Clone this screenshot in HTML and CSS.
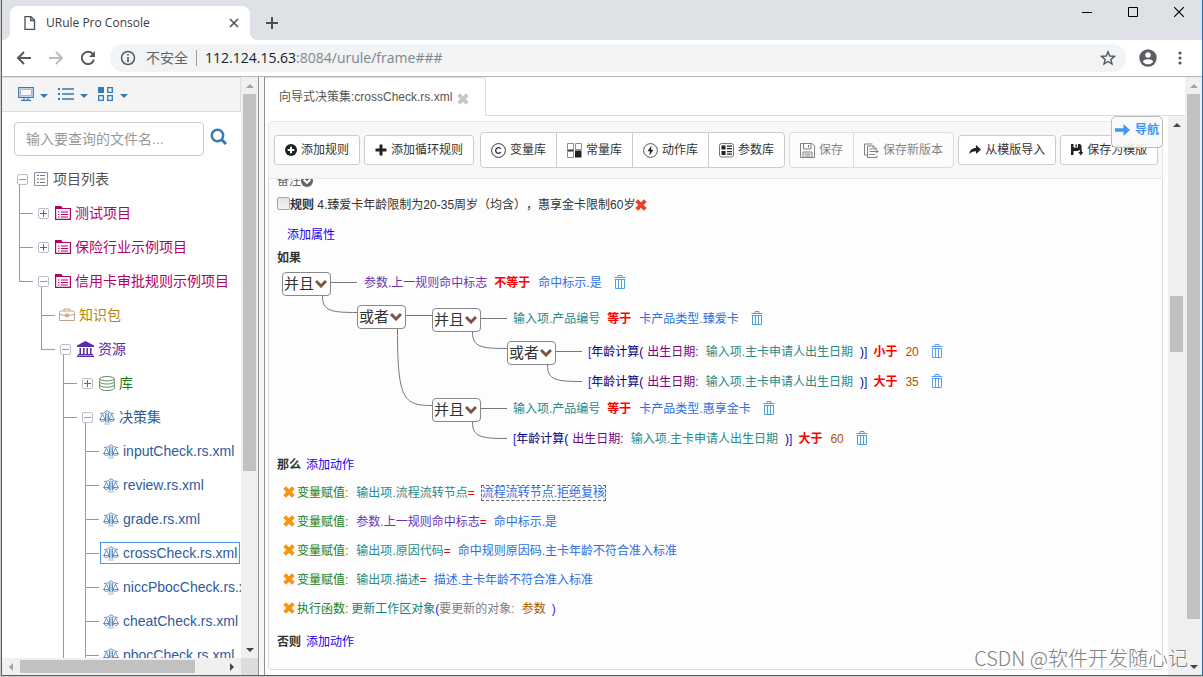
FILE: index.html
```html
<!DOCTYPE html>
<html lang="zh-CN">
<head>
<meta charset="utf-8">
<title>URule Pro Console</title>
<link rel="stylesheet" href="styles.css">
</head>
<body>
<svg class="sprite" aria-hidden="true">
  <symbol id="i-scale" viewBox="0 0 16 16"><path d="M6.500 3.500h3v10h-3z" fill="#a6d0f0"/><g fill="none" stroke="#5f82b4" stroke-width=".9"><path d="M1 4.500Q5 4.500 6 3Q8 .5 10 3Q11 4.500 15 4.500M6.500 4V13.500M9.500 4V13.500M3.500 5L1 10.500M3.500 5L6 10.500M12.500 5L10 10.500M12.500 5L15 10.500"/><path d="M.5 10.500H6Q5.500 12.500 3.500 12.500T.5 10.500ZM10 10.500H15.500Q14.500 12.500 12.500 12.500T10 10.500Z"/><path d="M5 15H11" stroke="#aab"/></g></symbol>
  <symbol id="i-project" viewBox="0 0 16 16"><path d="M.6 14.400V3.500H15.400V14.400Z" fill="none" stroke="currentColor" stroke-width="1.200"/><path d="M0 4V1h6.500l1 2H16v1zM3 6.500h1.500v1H3zM3 9h1.500v1H3zM3 11.500h1.500v1H3zM6 6.500h7v1H6zM6 9h7v1H6zM6 11.500h7v1H6z" fill="currentColor"/></symbol>
  <symbol id="i-trash" viewBox="0 0 12 14"><path d="M.5 2.500H11.500M4 2V.5H8V2M1.500 4V13.500H10.500V4M4.500 4V13M7.500 4V13M1.500 4.500H10.500" fill="none" stroke="currentColor" stroke-width="1"/></symbol>
  <symbol id="i-x" viewBox="0 0 12 12"><path d="M.3 3L3 .3L6 3.300L9 .3L11.700 3L8.700 6L11.700 9L9 11.700L6 8.700L3 11.700L.3 9L3.300 6Z" fill="currentColor"/></symbol>
  <symbol id="i-chev" viewBox="0 0 12 9"><path d="M1 2L6 7L11 2" fill="none" stroke="currentColor" stroke-width="3"/></symbol>
  <symbol id="i-up" viewBox="0 0 8 4"><path d="M0 4L4 0L8 4Z" fill="currentColor"/></symbol>
  <symbol id="i-down" viewBox="0 0 8 4"><path d="M0 0L4 4L8 0Z" fill="currentColor"/></symbol>
</svg>

<div class="window">
  <header class="tabstrip">
    <div class="browser-tab">
      <svg width="12" height="14" viewBox="0 0 12 14" fill="none" stroke="#4a4d51" stroke-width="1.300"><path d="M1 .7H7L10.500 4.200V13.300H1Z"/><path d="M6.700 1V4.500H10.500"/></svg>
      <span>URule Pro Console</span>
      <button class="bare" aria-label="关闭标签页"><svg width="10" height="10" viewBox="0 0 10 10" stroke="#4a4d51" stroke-width="1.500"><path d="M1 1L9 9M9 1L1 9"/></svg></button>
    </div>
    <button class="bare newtab" aria-label="新标签页"><svg width="12" height="12" viewBox="0 0 12 12" stroke="#4a4d51" stroke-width="2"><path d="M0 6H12M6 0V12"/></svg></button>
    <div class="winbtns">
      <button class="bare" aria-label="最小化"><svg width="10" height="10" viewBox="0 0 10 10" stroke="#000"><path d="M0 5.500H10"/></svg></button>
      <button class="bare" aria-label="最大化"><svg width="10" height="10" viewBox="0 0 10 10" stroke="#000" fill="none"><path d="M.5.5H9.500V9.500H.5Z"/></svg></button>
      <button class="bare" aria-label="关闭"><svg width="10" height="10" viewBox="0 0 10 10" stroke="#000" stroke-width="1.200"><path d="M0 0L10 10M10 0L0 10"/></svg></button>
    </div>
  </header>

  <nav class="navbar">
    <button class="bare nb" aria-label="后退"><svg width="16" height="16" viewBox="0 0 16 16" fill="none" stroke="#55585c" stroke-width="2"><path d="M15 8H2M8 2L2 8L8 14"/></svg></button>
    <button class="bare nb" aria-label="前进"><svg width="16" height="16" viewBox="0 0 16 16" fill="none" stroke="#bbb" stroke-width="2"><path d="M1 8H14M8 2L14 8L8 14"/></svg></button>
    <button class="bare nb" aria-label="刷新"><svg width="16" height="16" viewBox="0 0 16 16"><path d="M13 4.200A6.200 6.200 0 1 0 14 9.500" fill="none" stroke="#55585c" stroke-width="2"/><path d="M15 1V7H9Z" fill="#55585c"/></svg></button>
    <div class="omnibox">
      <svg width="16" height="16" viewBox="0 0 16 16"><circle cx="8" cy="8" r="6.500" fill="none" stroke="#55585c" stroke-width="1.500"/><path d="M7.200 4h1.600v1.600H7.200zM7.200 7h1.600v5H7.200z" fill="#55585c"/></svg>
      <span class="insecure">不安全</span>
      <span class="url"><b>112.124.15.63</b>:8084/urule/frame###</span>
      <button class="bare star" aria-label="收藏"><svg width="16" height="16" viewBox="0 0 16 16" fill="none" stroke="#55585c" stroke-width="1.400"><path d="M8 1.700L9.800 6L14.400 6.400L10.900 9.400L12 14L8 11.500L4 14L5.100 9.400L1.600 6.400L6.200 6Z"/></svg></button>
    </div>
    <button class="bare" aria-label="用户"><svg width="18" height="18" viewBox="0 0 18 18"><circle cx="9" cy="9" r="8.700" fill="#5b5e63"/><circle cx="9" cy="6" r="2.700" fill="#fff"/><path d="M3.600 12.500Q5 10.300 9 10.300T14.400 12.500Q12.500 15.300 9 15.300T3.600 12.500Z" fill="#fff"/></svg></button>
    <button class="bare menu" aria-label="菜单"><svg width="4" height="14" viewBox="0 0 4 14" fill="#55585c"><circle cx="2" cy="2" r="1.600"/><circle cx="2" cy="7" r="1.600"/><circle cx="2" cy="12" r="1.600"/></svg></button>
  </nav>

  <main class="workspace">
    <aside class="sidebar">
      <div class="side-view">
        <div class="side-tools">
          <button class="bare" aria-label="显示"><svg width="16" height="14" viewBox="0 0 16 14" fill="none" stroke="#337ab7"><path d="M.7.7H15.300V10.300H.7ZM3 13.300H13M6 10.500V13M10 10.500V13" stroke-width="1.200"/><path d="M2.500 2.500H13.500V8.500H2.500Z" stroke="#c9a9b0" fill="#f8f8f8"/></svg><svg class="tri" width="8" height="4"><use href="#i-down"/></svg></button>
          <button class="bare" aria-label="列表"><svg width="16" height="14" viewBox="0 0 16 14" fill="#337ab7"><path d="M0 1h2v2H0zM0 6h2v2H0zM0 11h2v2H0zM4 1.300h12v1.400H4zM4 6.300h12v1.400H4zM4 11.300h12v1.400H4z"/></svg><svg class="tri" width="8" height="4"><use href="#i-down"/></svg></button>
          <button class="bare" aria-label="分类"><svg width="16" height="14" viewBox="0 0 16 14" fill="none" stroke="#337ab7" stroke-width="1.300"><path d="M.7.700H5.300V5.300H.7Z" fill="#337ab7"/><path d="M9.700.700H14.300V5.300H9.700ZM.7 8.700H5.300V13.300H.7ZM9.700 8.700H14.300V13.300H9.700Z"/></svg><svg class="tri" width="8" height="4"><use href="#i-down"/></svg></button>
        </div>
        <form class="search">
          <input type="text" aria-label="查询文件" placeholder="输入要查询的文件名...">
          <button type="button" class="bare" aria-label="查询"><svg width="18" height="18" viewBox="0 0 18 18" fill="none" stroke="#337ab7"><circle cx="7.500" cy="7.500" r="5.700" stroke-width="2.400"/><path d="M11.800 11.800L16 16" stroke-width="3"/></svg></button>
        </form>
        <ul class="tree">
          <li class="root"><div class="row"><button class="exp minus" aria-label="折叠"></button><a href="#" class="c-root"><svg width="15" height="14" viewBox="0 0 15 14"><path d="M.5.500H13.500V13.500H.5Z" fill="none" stroke="#8a94a0"/><path d="M3 3h2v1H3zM3 6.500h2v1H3zM3 10h2v1H3zM6 3h5v1H6zM6 6.500h5v1H6zM6 10h5v1H6z" fill="#777"/></svg>项目列表</a></div>
            <ul>
              <li><div class="row"><button class="exp" aria-label="展开"></button><a href="#" class="c-proj"><svg width="16" height="16"><use href="#i-project"/></svg>测试项目</a></div></li>
              <li><div class="row"><button class="exp" aria-label="展开"></button><a href="#" class="c-proj"><svg width="16" height="16"><use href="#i-project"/></svg>保险行业示例项目</a></div></li>
              <li><div class="row"><button class="exp minus" aria-label="折叠"></button><a href="#" class="c-proj"><svg width="16" height="16"><use href="#i-project"/></svg>信用卡审批规则示例项目</a></div>
                <ul>
                  <li><div class="row leaf"><a href="#" class="c-pkg"><svg width="16" height="14" viewBox="0 0 16 14" fill="none" stroke="#c9a184"><path d="M.5 4.500Q.5 3 2 3H14Q15.500 3 15.500 4.500V12.500H.5ZM5 3V1H11V3M.5 6.500L6.500 7.500H9.500L15.500 6.500M6.500 6H9.500V8.500H6.500Z"/></svg>知识包</a></div></li>
                  <li><div class="row"><button class="exp minus" aria-label="折叠"></button><a href="#" class="c-res"><svg width="17" height="16" viewBox="0 0 17 16" fill="#5b2aa5"><path d="M8.500 0L17 4.500V6H0V4.500ZM2.500 7h1.500v6H2.500zM6 7h1.500v6H6zM9.500 7h1.500v6H9.500zM13 7h1.500v6H13zM1 13h15v1H1zM0 14.500h17V16H0z"/></svg>资源</a></div>
                    <ul>
                      <li><div class="row"><button class="exp" aria-label="展开"></button><a href="#" class="c-lib"><svg width="16" height="15" viewBox="0 0 16 15" fill="none" stroke="#5c8f63"><ellipse cx="8" cy="2.700" rx="7.300" ry="2.200"/><path d="M.7 2.700V12.300Q2 14.500 8 14.500T15.300 12.300V2.700M.7 5.800Q2 8 8 8T15.300 5.800M.7 9Q2 11.200 8 11.200T15.300 9"/></svg>库</a></div></li>
                      <li class="open-end"><div class="row"><button class="exp minus" aria-label="折叠"></button><a href="#" class="c-file"><svg width="16" height="16"><use href="#i-scale"/></svg>决策集</a></div>
                        <ul>
                          <li><div class="row leaf"><a href="#" class="c-file"><svg width="16" height="16"><use href="#i-scale"/></svg>inputCheck.rs.xml</a></div></li>
                          <li><div class="row leaf"><a href="#" class="c-file"><svg width="16" height="16"><use href="#i-scale"/></svg>review.rs.xml</a></div></li>
                          <li><div class="row leaf"><a href="#" class="c-file"><svg width="16" height="16"><use href="#i-scale"/></svg>grade.rs.xml</a></div></li>
                          <li><div class="row leaf"><a href="#" class="c-file selected"><svg width="16" height="16"><use href="#i-scale"/></svg>crossCheck.rs.xml</a></div></li>
                          <li><div class="row leaf"><a href="#" class="c-file"><svg width="16" height="16"><use href="#i-scale"/></svg>niccPbocCheck.rs.xml</a></div></li>
                          <li><div class="row leaf"><a href="#" class="c-file"><svg width="16" height="16"><use href="#i-scale"/></svg>cheatCheck.rs.xml</a></div></li>
                          <li class="open-end"><div class="row leaf"><a href="#" class="c-file"><svg width="16" height="16"><use href="#i-scale"/></svg>pbocCheck.rs.xml</a></div></li>
                        </ul>
                      </li>
                    </ul>
                  </li>
                </ul>
              </li>
            </ul>
          </li>
        </ul>
      </div>
      <div class="vbar side-v"><svg class="off" width="8" height="4"><use href="#i-up"/></svg><div class="track"><div class="thumb t-side"></div></div><svg width="8" height="4"><use href="#i-down"/></svg></div>
      <div class="hbar"><svg class="off" width="4" height="8" viewBox="0 0 4 8"><path d="M4 0L0 4L4 8Z" fill="currentColor"/></svg><div class="track"><div class="thumb t-h"></div></div><svg width="4" height="8" viewBox="0 0 4 8"><path d="M0 0L4 4L0 8Z" fill="currentColor"/></svg></div>
      <div class="corner"></div>
    </aside>
    <div class="splitter"></div>

    <section class="content">
      <div class="doc-tabs">
        <div class="doc-tab"><span>向导式决策集:crossCheck.rs.xml</span><button class="bare" aria-label="关闭"><svg width="12" height="12"><use href="#i-x"/></svg></button></div>
      </div>
      <div class="editor-wrap">
        <div class="editor">
          <div class="toolbar">
            <button class="btn"><svg width="12" height="12" viewBox="0 0 12 12"><circle cx="6" cy="6" r="6" fill="#222"/><path d="M2.700 6H9.300M6 2.700V9.300" stroke="#fff" stroke-width="2"/></svg>添加规则</button>
            <button class="btn"><svg width="12" height="12" viewBox="0 0 12 12" stroke="#222" stroke-width="3"><path d="M.5 6H11.500M6 .5V11.500"/></svg>添加循环规则</button>
            <div class="group">
              <button class="btn"><svg width="15" height="15" viewBox="0 0 15 15" fill="none" stroke="#333"><circle cx="7.500" cy="7.500" r="6.900"/><path d="M9.700 5.800A2.800 2.800 0 1 0 9.700 9.200" stroke-width="1.300"/></svg>变量库</button>
              <button class="btn"><svg width="15" height="15" viewBox="0 0 15 15" fill="none" stroke="#8a8f99"><path d="M.5.500H6.500V6.500H.5ZM8.500.500H14.500V6.500H8.500ZM.5 8.500H6.500V14.500H.5Z"/><path d="M8 7.500h6.500v7H8z" fill="#222" stroke="none"/><path d="M0 7.500H7" stroke="#444"/></svg>常量库</button>
              <button class="btn"><svg width="15" height="15" viewBox="0 0 15 15"><circle cx="7.500" cy="7.500" r="6.900" fill="none" stroke="#555"/><path d="M8.500 2.500L4.500 8.200H7L6.300 12.500L10.500 6.700H8Z" fill="#222"/></svg>动作库</button>
              <button class="btn"><svg width="15" height="15" viewBox="0 0 15 15"><rect x=".5" y=".5" width="14" height="13.500" rx="2" fill="none" stroke="#777"/><path d="M2.500 2.500h4v4h-4zM2.500 8h4v4h-4zM8 2.500h5v1.300H8zM8 5h5v1.300H8zM8 8h5v1.300H8zM8 10.500h5v1.300H8z" fill="#222"/></svg>参数库</button>
            </div>
            <div class="group faded">
              <button class="btn" disabled><svg width="15" height="15" viewBox="0 0 15 15" fill="none" stroke="#333"><path d="M.5.500H12L14.500 3V14.500H.5ZM3.500.500V6H11V.5M8.500 2V4.500M3 14.500V9H12V14.500M4.500 11H10.500M4.500 13H10.500"/></svg>保存</button>
              <button class="btn" disabled><svg width="15" height="15" viewBox="0 0 15 15" fill="none" stroke="#333"><path d="M8.500 1H.5V12H3M3.500 3V14.500H13V12.500M3.500 3H9.500L12.500 5.500M9 3V6H13M5.500 6H8M5.500 8.500H14M12 6.500L14 8.500L12 10.500M5.500 11.500H11"/></svg>保存新版本</button>
            </div>
            <button class="btn"><svg width="12" height="12" viewBox="0 0 12 12" fill="#222"><path d="M7 1L12 5.500L7 10V7.300Q2.500 7 .3 10Q.5 4.500 7 3.700Z"/></svg>从模版导入</button>
            <button class="btn"><svg width="12" height="12" viewBox="0 0 12 12" fill="#222"><path d="M0 0H2.500V3.500H7V0H9L10.500 1.500V6H7.500V7H2.500V11H0ZM4.500.5H6V2.800H4.500ZM8.800 6H10.800V8H12.300L9.800 11.500L7.300 8H8.800Z"/></svg>保存为模版</button>
            <a href="#" class="guide"><svg width="15" height="12" viewBox="0 0 15 12" fill="#3f96f5"><path d="M0 4.200H8.500V0L15 6L8.500 12V7.800H0Z"/></svg>导航</a>
          </div>

          <div class="rules">
            <div class="line remark">备注<svg width="12" height="12" viewBox="0 0 12 12"><circle cx="6" cy="6" r="6" fill="#666"/><path d="M2.700 4.500L6 7.800L9.300 4.500" fill="none" stroke="#fff" stroke-width="2"/></svg></div>
            <div class="line title"><input type="checkbox" id="rule4"><label for="rule4"><b>规则</b> 4.臻爱卡年龄限制为20-35周岁（均含），惠享金卡限制60岁</label><button class="bare red" aria-label="删除规则"><svg width="12" height="12"><use href="#i-x"/></svg></button></div>
            <div class="line attr"><a href="#">添加属性</a></div>
            <div class="line if"><b>如果</b></div>

            <div class="canvas">
              <svg class="wires" width="320" height="186" viewBox="0 2 320 186" fill="none" stroke="#777"><path d="M54 16.500H80M45.500 30C45.500 45 54 46.500 80 46.500M129 49.500H155M204 52.500H230M195.500 66C195.500 81 204 82.500 230 82.500M279 85.500H305M270.500 99C270.500 114 279 115.500 305 115.500M120.500 63C120.500 133 126 139.500 155 139.500M204 142.500H230M195.500 156C195.500 171 204 172.500 230 172.500"/></svg>
              <button class="node n1">并且<svg width="12" height="9"><use href="#i-chev"/></svg></button>
              <button class="node n2">或者<svg width="12" height="9"><use href="#i-chev"/></svg></button>
              <button class="node n3">并且<svg width="12" height="9"><use href="#i-chev"/></svg></button>
              <button class="node n4">或者<svg width="12" height="9"><use href="#i-chev"/></svg></button>
              <button class="node n5">并且<svg width="12" height="9"><use href="#i-chev"/></svg></button>
              <div class="cond r1"><span class="param">参数.上一规则命中标志</span><b class="op">不等于</b><span class="const">命中标示.是</span><button class="bare trash" aria-label="删除"><svg width="12" height="14"><use href="#i-trash"/></svg></button></div>
              <div class="cond r2"><span class="var">输入项.产品编号</span><b class="op">等于</b><span class="const">卡产品类型.臻爱卡</span><button class="bare trash" aria-label="删除"><svg width="12" height="14"><use href="#i-trash"/></svg></button></div>
              <div class="cond r3"><span class="fn"><i>[</i>年龄计算(</span><span class="arg">出生日期:</span><span class="var">输入项.主卡申请人出生日期</span><span class="fn end">)<i>]</i></span><b class="op">小于</b><span class="num">20</span><button class="bare trash" aria-label="删除"><svg width="12" height="14"><use href="#i-trash"/></svg></button></div>
              <div class="cond r4"><span class="fn"><i>[</i>年龄计算(</span><span class="arg">出生日期:</span><span class="var">输入项.主卡申请人出生日期</span><span class="fn end">)<i>]</i></span><b class="op">大于</b><span class="num">35</span><button class="bare trash" aria-label="删除"><svg width="12" height="14"><use href="#i-trash"/></svg></button></div>
              <div class="cond r5"><span class="var">输入项.产品编号</span><b class="op">等于</b><span class="const">卡产品类型.惠享金卡</span><button class="bare trash" aria-label="删除"><svg width="12" height="14"><use href="#i-trash"/></svg></button></div>
              <div class="cond r6"><span class="fn"><i>[</i>年龄计算(</span><span class="arg">出生日期:</span><span class="var">输入项.主卡申请人出生日期</span><span class="fn end">)<i>]</i></span><b class="op">大于</b><span class="num">60</span><button class="bare trash" aria-label="删除"><svg width="12" height="14"><use href="#i-trash"/></svg></button></div>
            </div>

            <div class="line then"><b>那么</b><a href="#">添加动作</a></div>
            <ul class="actions">
              <li><button class="bare orange" aria-label="删除动作"><svg width="12" height="12"><use href="#i-x"/></svg></button><span class="kind">变量赋值:</span><span class="var">输出项.流程流转节点<em>=</em></span><span class="const focus">流程流转节点.拒绝复核</span></li>
              <li><button class="bare orange" aria-label="删除动作"><svg width="12" height="12"><use href="#i-x"/></svg></button><span class="kind">变量赋值:</span><span class="param">参数.上一规则命中标志<em>=</em></span><span class="const">命中标示.是</span></li>
              <li><button class="bare orange" aria-label="删除动作"><svg width="12" height="12"><use href="#i-x"/></svg></button><span class="kind">变量赋值:</span><span class="var">输出项.原因代码<em>=</em></span><span class="const">命中规则原因码.主卡年龄不符合准入标准</span></li>
              <li><button class="bare orange" aria-label="删除动作"><svg width="12" height="12"><use href="#i-x"/></svg></button><span class="kind">变量赋值:</span><span class="var">输出项.描述<em>=</em></span><span class="const">描述.主卡年龄不符合准入标准</span></li>
              <li><button class="bare orange" aria-label="删除动作"><svg width="12" height="12"><use href="#i-x"/></svg></button><span class="kind call">执行函数:</span><span class="method">更新工作区对象</span><span class="paren">(</span><span class="gray">要更新的对象:</span><span class="num">参数</span><span class="paren last">)</span></li>
            </ul>
            <div class="line else"><b>否则</b><a href="#">添加动作</a></div>
          </div>
        </div>
        <div class="vbar"><svg width="8" height="4"><use href="#i-up"/></svg><div class="track t-mid"><div class="thumb t-edit"></div></div></div>
      </div>
    </section>
    <div class="vbar outer"><svg class="off" width="8" height="4"><use href="#i-up"/></svg><div class="track"><div class="thumb t-page"></div></div><svg width="8" height="4"><use href="#i-down"/></svg></div>
  </main>
  <div class="watermark">CSDN @软件开发随心记</div>
</div>
</body>
</html>
```
FILE: styles.css
```css
* { box-sizing: border-box; }
body {
  margin: 0;
  height: 100vh;
  padding: 0 0 1px 1px;
  overflow: hidden;
  background: #c9cac8;
  color: #333;
  font: 12px/20px "Liberation Sans", "Noto Sans CJK SC", sans-serif;
  text-spacing-trim: space-all;
}
ul { list-style: none; margin: 0; padding: 0; }
svg { display: block; flex: none; }
a { text-decoration: none; }
button { font: inherit; color: inherit; }
.sprite { position: absolute; width: 0; height: 0; }
.bare { border: 0; background: none; padding: 0; display: flex; align-items: center; justify-content: center; flex: none; }

.window {
  position: relative;
  display: flex;
  flex-direction: column;
  height: 100%;
  border: solid #1b6faf;
  border-width: 0 1px 1px;
  background: #fff;
}

/* browser chrome */
.tabstrip { display: flex; flex: none; height: 40px; background: #dee1e6; padding-left: 8px; align-items: flex-end; }
.browser-tab {
  position: relative;
  display: flex;
  align-items: center;
  width: 240px;
  height: 34px;
  padding: 0 11px 0 14px;
  gap: 10px;
  background: #fff;
  border-radius: 8px 8px 0 0;
  font: 12px/20px "Open Sans", sans-serif;
  color: #3c4043;
}
.browser-tab::before, .browser-tab::after { content: ""; position: absolute; bottom: 0; width: 8px; height: 8px; }
.browser-tab::before { left: -8px; background: radial-gradient(circle at 0 0, transparent 8px, #fff 8px); }
.browser-tab::after { right: -8px; background: radial-gradient(circle at 100% 0, transparent 8px, #fff 8px); }
.browser-tab span { flex: 1; }
.newtab { width: 44px; height: 34px; }
.winbtns { display: flex; margin-left: auto; align-self: flex-start; }
.winbtns button { width: 46px; height: 24px; }
.navbar { display: flex; flex: none; align-items: center; height: 37px; padding: 0 12px 0 6px; border-bottom: 1px solid #b2b5b2; }
.nb { width: 32px; height: 32px; }
.omnibox {
  display: flex;
  flex: 1;
  align-items: center;
  height: 28px;
  margin: 0 13px 0 6px;
  padding: 0 10px;
  border-radius: 14px;
  background: #f1f3f4;
  font: 14px/20px "Open Sans", "Noto Sans CJK SC", sans-serif;
  color: #80868b;
}
.insecure { margin-left: 10px; padding-right: 8px; color: #5f6368; line-height: 16px; border-right: 1px solid #9a9da1; }
.url { margin-left: 8px; }
.url b { font-weight: 400; color: #202124; }
.star { margin-left: auto; }
.menu { width: 20px; margin-left: 13px; }

.workspace { display: flex; flex: 1; min-height: 0; }

/* scroll bars */
.vbar { display: flex; flex-direction: column; align-items: center; flex: none; width: 17px; background: #f0f0f0; color: #444; }
.vbar > svg, .hbar > svg { margin: 7px; }
.vbar > svg { height: 4px; margin: 7px 0 6px; }
.vbar .track { flex: 1; width: 13px; }
.off { color: #a3a3a3; }
.thumb { background: #c1c1c1; }
.t-side { height: 69%; }
.t-page { height: 93%; }
.t-edit { height: 56px; }
.t-mid { display: flex; flex-direction: column; }
.t-mid::before { content: ""; height: 30%; }
.hbar { display: flex; align-items: center; background: #f0f0f0; color: #444; height: 17px; }
.hbar .track { flex: 1; height: 13px; }
.t-h { height: 13px; width: 86%; }

/* sidebar */
.sidebar { display: grid; flex: none; width: 256px; grid-template: minmax(0, 1fr) 17px / minmax(0, 1fr) 17px; }
.corner { background: #dcdcdc; }
.side-view { overflow: hidden; min-width: 0; }
.side-tools { display: flex; gap: 10px; height: 35px; padding: 0 0 2px 16px; background: #f4f4f4; border: 1px solid #ddd; border-left: 0; color: #337ab7; }
.side-tools .bare { gap: 6px; color: #337ab7; }
.tri { margin-top: 4px; }
.search { display: flex; align-items: center; gap: 6px; padding: 10px 12px 6px; }
.search input {
  flex: none;
  width: 190px;
  height: 34px;
  padding: 0 11px;
  border: 1px solid #ccc;
  border-radius: 4px;
  font: 14px/20px "Liberation Sans", "Noto Sans CJK SC", sans-serif;
}
.search input::placeholder { color: #999; }
.search .bare { margin-bottom: 4px; }
.tree { padding-left: 14px; font-size: 14px; white-space: nowrap; }
.tree ul { margin-left: 22px; }
.root > ul { margin-left: 3px; }
.tree li { position: relative; }
.tree li:not(.root)::before { content: ""; position: absolute; left: 0; top: -11px; bottom: 0; border-left: 1px solid #999; }
.tree li:last-child:not(.root):not(.open-end)::before { bottom: auto; height: 29px; }
.tree li:not(.root)::after { content: ""; position: absolute; left: 0; top: 17px; width: 14px; border-top: 1px solid #999; }
.row { display: flex; align-items: center; gap: 6px; height: 34px; padding-left: 19px; }
.root > .row { padding-left: 1px; }
.row.leaf { padding-left: 15px; }
.row a { display: flex; align-items: center; gap: 4px; }
.leaf a { height: 22px; padding: 0 2px; border: 1px solid transparent; }
.leaf a.selected { border-color: #4a96e6; }
.exp {
  flex: none;
  width: 11px;
  height: 11px;
  padding: 0;
  border: 1px solid #b9c0cc;
  border-radius: 2px;
  background:
    linear-gradient(#666, #666) center / 7px 1px no-repeat,
    linear-gradient(#666, #666) center / 1px 7px no-repeat,
    #fff;
}
.exp.minus { background: linear-gradient(#999, #999) center / 7px 1px no-repeat, #fff; }
.c-root { color: #555; }
.c-proj { color: #b5006a; }
.c-pkg { color: #b8860b; }
.c-res { color: #5b2aa5; }
.c-lib { color: #1f7a1f; }
.c-file { color: #2e5b9e; }

.splitter { flex: none; width: 7px; background: #f7f7f7; border: solid #919191; border-width: 0 1px; }

/* editor */
.content { display: flex; flex: 1; flex-direction: column; min-width: 0; }
.doc-tabs { display: flex; flex: none; height: 39px; border-bottom: 1px solid #ddd; }
.doc-tab {
  display: flex;
  align-items: center;
  gap: 5px;
  height: 39px;
  margin-right: -1px;
  padding: 0 16px 0 14px;
  background: #fff;
  border: solid #ddd;
  border-width: 1px 1px 0 0;
  border-radius: 0 4px 0 0;
  color: #555;
}
.doc-tab .bare { color: #c8c8c8; margin-top: 4px; }
.editor-wrap { display: flex; flex: 1; min-height: 0; }
.editor { display: flex; flex: 1; flex-direction: column; min-width: 0; padding: 5px 5px 5px 3px; }
.toolbar {
  position: relative;
  display: flex;
  flex: none;
  align-items: center;
  gap: 4px;
  height: 58px;
  padding: 0 5px;
  background: #f8f8f8;
  border: 1px solid #e7e7e7;
  border-radius: 4px 4px 0 0;
}
.btn {
  display: flex;
  align-items: center;
  gap: 4px;
  height: 30px;
  padding: 0 10px;
  background: #fff;
  border: 1px solid #ccc;
  border-radius: 3px;
  white-space: nowrap;
  color: #333;
}
.group { display: flex; margin-left: 2px; }
.group + .group { margin-left: 0; }
.group .btn { height: 36px; margin-left: -1px; border-radius: 0; }
.group .btn:first-child { margin-left: 0; border-radius: 4px 0 0 4px; }
.group .btn:last-child { border-radius: 0 4px 4px 0; }
.faded .btn { color: #333; }
.faded { opacity: .6; }
.guide {
  position: absolute;
  top: -6px;
  right: -1px;
  display: flex;
  align-items: center;
  gap: 5px;
  height: 32px;
  padding: 0 3px;
  padding-bottom: 5px;
  background: rgba(250, 250, 250, .9);
  border: 1px solid #bbb;
  border-radius: 5px;
  color: #3f96f5;
  font-weight: 700;
}
.rules {
  flex: 1;
  min-height: 0;
  overflow: hidden;
  padding: 0 8px;
  background: #fdfdfd;
  border: 1px solid #ddd;
  border-top: 0;
  border-radius: 0 0 4px 4px;
  white-space: nowrap;
}
.rules a { color: #2200ee; }
.line { display: flex; align-items: center; height: 20px; }
.remark { margin-top: -8px; color: #666; }
.title { margin-top: 4px; }
.title input { width: 13px; height: 13px; margin: 0 0 4px; appearance: none; border: 1px solid #a5a5a5; border-radius: 2px; background: linear-gradient(#e3e3e3, #f3f3f3); }
.red { color: #e8412c; }
.attr { margin-top: 10px; padding-left: 10px; }
.if { margin-top: 3px; }
.then, .else { gap: 5px; }
.then { margin-top: 1px; }
.else { margin-top: 9px; }

/* condition diagram */
.canvas { position: relative; height: 186px; }
.wires { position: absolute; left: 0; top: 0; }
.node {
  position: absolute;
  display: flex;
  align-items: center;
  gap: 1px;
  width: 49px;
  height: 24px;
  padding: 0 1px;
  background: #fff;
  border: 1px solid #888;
  border-radius: 4px;
  font-size: 15px;
}
.node svg { color: #7a5548; margin-bottom: 2px; }
.n1 { left: 5px; top: 4px; }
.n2 { left: 80px; top: 37px; }
.n3 { left: 155px; top: 40px; }
.n4 { left: 230px; top: 73px; }
.n5 { left: 155px; top: 130px; }
.cond { position: absolute; display: flex; align-items: center; height: 20px; }
.r1 { left: 87px; top: 5px; }
.r2 { left: 236px; top: 41px; }
.r3 { left: 311px; top: 74px; }
.r4 { left: 311px; top: 104px; }
.r5 { left: 236px; top: 131px; }
.r6 { left: 236px; top: 161px; }
.op { margin: 0 8px 0 7px; color: #f00; }
.trash { margin: 0 0 2px 12px; color: #45a0ee; }
.r3 .trash, .r4 .trash { color: #5f9cfa; }
.param { color: #6a35b5; }
.const { color: #2f6fe0; }
.var { color: #2a8a86; }
.fn { color: #00007f; }
.fn i { font-style: normal; color: #22e; }
.arg { margin: 0 7px 0 4px; color: #7b007b; }
.end { margin-left: 7px; }
.end + .op { margin-left: 6px; }
.num { color: #aa5500; }

.actions { margin-top: 3px; padding-left: 6px; }
.actions li { display: flex; align-items: center; height: 29px; }
.orange { color: #f79410; margin: 0 2px 2px 0; }
.kind { margin-right: 8px; color: #1b801b; }
.kind.call { margin-right: 3px; }
.actions em { font-style: normal; color: #f00; margin-right: 7px; }
.focus { outline: 1px dashed #666; line-height: 14px; }
.method { color: #17807c; }
.paren { color: #22e; }
.gray { margin-right: 7px; color: #808080; }
.last { margin-left: 6px; }

.watermark {
  position: absolute;
  right: 14px;
  bottom: 3px;
  font: 300 20px/28px "Noto Sans CJK SC", sans-serif;
  color: #808080;
  text-shadow: 1px 1px 0 #fff;
}
```
